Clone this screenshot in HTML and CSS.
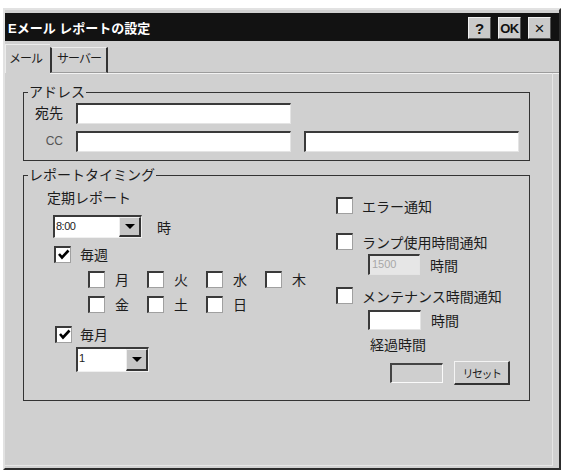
FILE: index.html
```html
<!DOCTYPE html>
<html lang="ja">
<head>
<meta charset="utf-8">
<title>Eメール レポートの設定</title>
<link rel="stylesheet" href="styles.css">
</head>
<body>
<div class="window">
  <div class="titlebar">
    <span class="title">Eメール レポートの設定</span>
    <div class="tbuttons">
      <span class="tbtn help">?</span>
      <span class="tbtn ok">OK</span>
      <span class="tbtn close">×</span>
    </div>
  </div>
  <div class="tabs">
    <div class="tab active">メール</div>
    <div class="tab">サーバー</div>
    <div class="tabfill"></div>
  </div>
  <div class="panel">
    <fieldset class="group address">
      <legend>アドレス</legend>
      <div class="addr-grid">
        <span class="addr-label">宛先</span>
        <span class="field"></span>
        <span></span>
        <span class="addr-label cc">CC</span>
        <span class="field"></span>
        <span class="field"></span>
      </div>
    </fieldset>
    <fieldset class="group timing">
      <legend>レポートタイミング</legend>
      <div class="timing-body">
        <div class="col-left">
          <div class="heading">定期レポート</div>
          <div class="combo-row">
            <div class="combo combo-time"><span class="combo-text">8:00</span><span class="combo-btn"></span></div>
            <span class="unit">時</span>
          </div>
          <div class="check-row weekly">
            <span class="cb"><svg viewBox="0 0 13 13" width="13" height="13"><path d="M2 6 L5 9.5 L11.5 2.5" fill="none" stroke="#000" stroke-width="2.6"/></svg></span>
            <span>毎週</span>
          </div>
          <div class="days">
            <div class="day"><span class="cb"></span><span>月</span></div>
            <div class="day"><span class="cb"></span><span>火</span></div>
            <div class="day"><span class="cb"></span><span>水</span></div>
            <div class="day"><span class="cb"></span><span>木</span></div>
            <div class="day"><span class="cb"></span><span>金</span></div>
            <div class="day"><span class="cb"></span><span>土</span></div>
            <div class="day"><span class="cb"></span><span>日</span></div>
          </div>
          <div class="check-row monthly">
            <span class="cb"><svg viewBox="0 0 13 13" width="13" height="13"><path d="M2 6 L5 9.5 L11.5 2.5" fill="none" stroke="#000" stroke-width="2.6"/></svg></span>
            <span>毎月</span>
          </div>
          <div class="combo combo-day"><span class="combo-text">1</span><span class="combo-btn"></span></div>
        </div>
        <div class="col-right">
          <div class="check-row notify first">
            <span class="cb"></span><span>エラー通知</span>
          </div>
          <div class="check-row notify lamp">
            <span class="cb"></span><span>ランプ使用時間通知</span>
          </div>
          <div class="hours-row lamp-hours">
            <span class="field small disabled">1500</span>
            <span class="unit">時間</span>
          </div>
          <div class="check-row notify maint">
            <span class="cb"></span><span>メンテナンス時間通知</span>
          </div>
          <div class="hours-row maint-hours">
            <span class="field small"></span>
            <span class="unit">時間</span>
          </div>
          <div class="elapsed">経過時間</div>
          <div class="reset-row">
            <span class="readonly"></span>
            <span class="button">リセット</span>
          </div>
        </div>
      </div>
    </fieldset>
  </div>
</div>
</body>
</html>
```
FILE: styles.css
```css
body {
  margin: 0;
  background: #ffffff;
  font-family: "Liberation Sans", "Noto Sans CJK JP", sans-serif;
  font-size: 14px;
  color: #1c1c1c;
}

.window {
  box-sizing: border-box;
  width: 558px;
  height: 462px;
  margin: 8px 0 0 3px;
  border: 2px solid;
  border-color: #e2e2e2 #2c2c2c #2c2c2c #e2e2e2;
  padding-top: 3px;
  background: #d0d0d0;
  display: flex;
  flex-direction: column;
}

.titlebar {
  flex: none;
  height: 28px;
  background: #121212;
  color: #ffffff;
  display: flex;
  align-items: center;
  justify-content: space-between;
  padding: 0 8px 0 3px;
}

.title {
  font-weight: bold;
  font-size: 13px;
}

.tbuttons {
  display: flex;
  gap: 7px;
  padding-top: 2px;
}

.tbtn {
  box-sizing: border-box;
  width: 23px;
  height: 22px;
  background: #cacaca;
  color: #111111;
  border: 1px solid;
  border-color: #f0f0f0 #555555 #555555 #f0f0f0;
  display: flex;
  align-items: center;
  justify-content: center;
  font-weight: bold;
  font-size: 15px;
  line-height: 1;
}

.tbtn.ok {
  font-size: 13px;
  letter-spacing: -0.5px;
}

.tbtn.close {
  font-weight: normal;
  font-size: 17px;
}

.tabs {
  flex: none;
  height: 32px;
  display: flex;
  align-items: flex-end;
}

.tab {
  box-sizing: border-box;
  width: 58px;
  height: 26px;
  border-style: solid;
  border-width: 1px 2px 1px 2px;
  border-color: #ececec #333333 #9c9c9c #333333;
  box-shadow: 0 1px 0 #f2f2f2;
  padding: 4px 0 0 5px;
  font-size: 12px;
  line-height: 14px;
  letter-spacing: -1px;
}

.tab.active {
  width: 45px;
  height: 29px;
  border-width: 1px 0 0 1px;
  border-color: #ececec;
  box-shadow: none;
  padding: 7px 0 0 3px;
}

.tabfill {
  flex: 1;
  height: 0;
  border-bottom: 1px solid #9c9c9c;
  box-shadow: 0 1px 0 #f2f2f2;
}

.panel {
  flex: 1;
  margin: 0 6px 2px 0;
  border-right: 1px solid #e6e6e6;
  border-bottom: 1px solid #e6e6e6;
  padding: 12px 0 0 18px;
}

.group {
  box-sizing: border-box;
  width: 507px;
  margin: 0;
  padding: 0;
  border: 1px solid #333333;
  min-width: 0;
}

.group legend {
  margin-left: 4px;
  padding: 0 1px;
  font-size: 14px;
  line-height: 15px;
}

.addr-grid {
  display: grid;
  grid-template-columns: 39px 215px 215px;
  grid-auto-rows: 21px;
  column-gap: 13px;
  row-gap: 7px;
  padding: 3px 9px 8px 0;
}

.addr-label {
  text-align: right;
  line-height: 21px;
}

.addr-label.cc {
  font-size: 12px;
  color: #555555;
}

.field {
  box-sizing: border-box;
  background: #ffffff;
  border-style: solid;
  border-width: 2px 1px 1px 2px;
  border-color: #3a3a3a #e4e4e4 #e4e4e4 #3a3a3a;
}

.timing {
  margin-top: 7px;
}

.timing-body {
  display: flex;
}

.col-left {
  box-sizing: border-box;
  width: 312px;
  padding: 7px 0 28px 23px;
  display: flex;
  flex-direction: column;
  align-items: flex-start;
}

.heading {
  line-height: 16px;
}

.combo-row {
  margin: 9px 0 0 6px;
  display: flex;
  align-items: center;
}

.combo {
  box-sizing: border-box;
  display: flex;
  background: #ffffff;
  border-style: solid;
  border-width: 2px 1px 1px 2px;
  border-color: #3a3a3a #f0f0f0 #f0f0f0 #3a3a3a;
}

.combo-time {
  width: 89px;
  height: 23px;
}

.combo-day {
  width: 73px;
  height: 25px;
  margin: 4px 0 0 29px;
}

.combo-text {
  flex: 1;
  font-size: 11px;
  line-height: 14px;
  padding: 2px 0 0 1px;
  letter-spacing: -0.5px;
}

.combo-btn {
  box-sizing: border-box;
  width: 22px;
  background: #c6c6c6;
  border-style: solid;
  border-width: 1px 2px 2px 1px;
  border-color: #eeeeee #333333 #333333 #eeeeee;
  display: flex;
  align-items: center;
  justify-content: center;
}

.combo-btn::after {
  content: "";
  border-left: 5px solid transparent;
  border-right: 5px solid transparent;
  border-top: 5px solid #000000;
}

.unit {
  margin-left: 15px;
}

.cb {
  box-sizing: border-box;
  flex: none;
  width: 17px;
  height: 17px;
  background: #ffffff;
  border-style: solid;
  border-width: 2px 1px 1px 2px;
  border-color: #3a3a3a #a0a0a0 #a0a0a0 #3a3a3a;
  display: flex;
  align-items: center;
  justify-content: center;
}

.check-row {
  display: flex;
  align-items: center;
  height: 18px;
  gap: 9px;
}

.weekly {
  margin: 7px 0 0 7px;
}

.days {
  margin: 7px 0 0 41px;
  display: grid;
  grid-template-columns: repeat(4, 59px);
  grid-auto-rows: 18px;
  row-gap: 7px;
}

.day {
  display: flex;
  align-items: center;
  gap: 10px;
}

.monthly {
  margin: 12px 0 0 8px;
  gap: 8px;
}

.col-right {
  padding-top: 14px;
  display: flex;
  flex-direction: column;
  align-items: flex-start;
}

.notify {
  height: 17px;
}

.notify.lamp {
  margin-top: 19px;
}

.notify.maint {
  margin-top: 12px;
}

.hours-row {
  display: flex;
  align-items: center;
  margin-left: 32px;
}

.hours-row .unit {
  margin-left: 10px;
}

.lamp-hours {
  margin-top: 4px;
}

.maint-hours {
  margin-top: 6px;
}

.field.small {
  width: 52px;
  height: 21px;
}

.maint-hours .field.small {
  width: 53px;
  height: 20px;
}

.field.disabled {
  background: #e6e6e6;
  color: #a8a8a8;
  font-size: 11px;
  line-height: 17px;
  padding-left: 2px;
}

.elapsed {
  margin: 7px 0 0 34px;
  line-height: 16px;
}

.reset-row {
  margin: 8px 0 0 54px;
  display: flex;
  align-items: center;
  gap: 11px;
}

.readonly {
  box-sizing: border-box;
  width: 53px;
  height: 20px;
  background: #cfcfcf;
  border-style: solid;
  border-width: 2px 1px 1px 2px;
  border-color: #444444 #fafafa #fafafa #444444;
}

.button {
  box-sizing: border-box;
  width: 56px;
  height: 24px;
  background: #cdcdcd;
  border-style: solid;
  border-width: 1px 2px 2px 1px;
  border-color: #f4f4f4 #333333 #333333 #f4f4f4;
  display: flex;
  align-items: center;
  justify-content: center;
  font-size: 11px;
  letter-spacing: -1.5px;
}
```
